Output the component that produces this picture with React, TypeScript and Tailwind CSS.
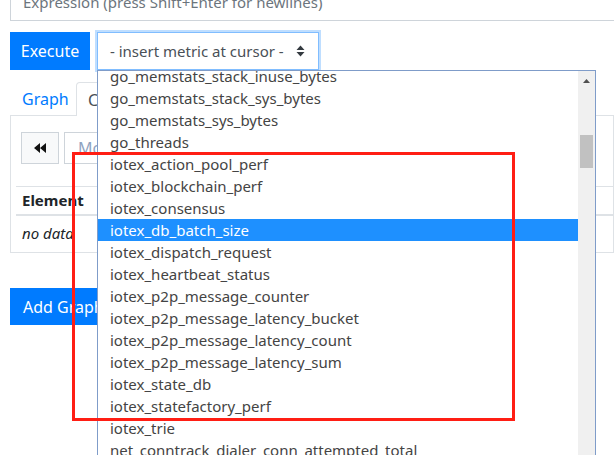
const metrics = [
  "go_memstats_stack_inuse_bytes",
  "go_memstats_stack_sys_bytes",
  "go_memstats_sys_bytes",
  "go_threads",
  "iotex_action_pool_perf",
  "iotex_blockchain_perf",
  "iotex_consensus",
  "iotex_db_batch_size",
  "iotex_dispatch_request",
  "iotex_heartbeat_status",
  "iotex_p2p_message_counter",
  "iotex_p2p_message_latency_bucket",
  "iotex_p2p_message_latency_count",
  "iotex_p2p_message_latency_sum",
  "iotex_state_db",
  "iotex_statefactory_perf",
  "iotex_trie",
  "net_conntrack_dialer_conn_attempted_total",
];

function MetricList() {
  return (
    <div className="absolute left-[97px] top-[70px] w-[499px] h-[400px] bg-white border border-[#7f9cc9] flex overflow-hidden">
      <div className="flex-1 overflow-hidden">
        <ul className="-mt-[6px]">
          {metrics.map((m) => (
            <li
              key={m}
              className={
                m === "iotex_db_batch_size"
                  ? "h-[22px] leading-[22px] pl-[12px] whitespace-nowrap bg-[#1e90ff] text-white"
                  : "h-[22px] leading-[22px] pl-[12px] whitespace-nowrap text-[#444]"
              }
            >
              {m}
            </li>
          ))}
        </ul>
      </div>
      <div className="w-[17px] bg-[#f0f0f0] relative">
        <svg className="absolute left-[5px] top-[8px]" width="7" height="4" viewBox="0 0 7 4">
          <path d="M0 4 L3.5 0 L7 4 Z" fill="#505050" />
        </svg>
        <div className="absolute left-[2px] top-[64px] w-[13px] h-[33px] bg-[#c1c1c1]" />
      </div>
    </div>
  );
}

export default function App() {
  return (
    <div className="relative w-[614px] h-[455px] overflow-hidden bg-white font-['Noto_Sans',sans-serif] text-[15px] text-[#212529]">
      <div className="pl-[10px]">
        <div className="-mt-[17px] h-[38px] border border-[#ced4da] border-r-0 px-3 flex items-center text-[#6c757d] text-[15px] whitespace-nowrap">
          Expression (press Shift+Enter for newlines)
        </div>

        <div className="mt-[11px] flex gap-[7px]">
          <button className="w-[80px] h-[38px] bg-[#007bff] text-white text-[16px]">Execute</button>
          <div className="w-[222px] h-[38px] border border-[#80bdff] shadow-[0_0_0_2px_rgba(0,123,255,0.25)] flex items-center justify-between pl-[12px] pr-[13px] text-[15px] text-[#495057] whitespace-nowrap">
            <span>- insert metric at cursor -</span>
            <svg width="9" height="14" viewBox="0 0 9 14">
              <path d="M0.5 6 L4.5 1.5 L8.5 6 Z M0.5 8 L4.5 12.5 L8.5 8 Z" fill="#343a40" />
            </svg>
          </div>
        </div>

        <div className="mt-[13px] flex items-end h-[33px] border-b border-[#dee2e6]">
          <div className="w-[66px] h-[33px] flex items-center pl-[12px] text-[#007bff] text-[16px]">Graph</div>
          <div className="h-[34px] -mb-px bg-white border border-b-0 border-[#dee2e6] rounded-t-[4px] px-[11px] flex items-center text-[16px] text-[#495057]">
            Console
          </div>
        </div>

        <div className="h-[137px] border border-t-0 border-[#dee2e6] pl-[5px]">
          <div className="pt-[16px] pl-[5px] flex gap-[5px]">
            <button className="w-[38px] h-[32px] bg-[#f8f9fa] border border-[#ced4da] flex items-center justify-center">
              <svg width="12" height="10" viewBox="0 0 12 10">
                <path d="M6 0 L0 5 L6 10 Z M12 0 L6 5 L12 10 Z" fill="#111" />
              </svg>
            </button>
            <div className="w-[220px] h-[32px] border border-[#ced4da] flex items-center pl-[13px] text-[#8fa3bf] text-[16px]">
              Moment
            </div>
          </div>
          <table className="mt-[22px] w-full border-collapse">
            <thead>
              <tr className="border-t border-b-2 border-[#dee2e6]">
                <th className="h-[28px] text-left pl-[6px] font-bold text-[#212529]">Element</th>
              </tr>
            </thead>
            <tbody>
              <tr>
                <td className="h-[36px] pl-[6px] italic text-[#212529]">no data</td>
              </tr>
            </tbody>
          </table>
        </div>

        <button className="mt-[35px] w-[110px] h-[37px] bg-[#007bff] text-white text-[16px] text-left pl-[13px]">
          Add Graph
        </button>
      </div>

      <MetricList />

      <div className="absolute left-[72px] top-[152px] w-[443px] h-[269px] border-[3px] border-[#ff1e14]" />
    </div>
  );
}
